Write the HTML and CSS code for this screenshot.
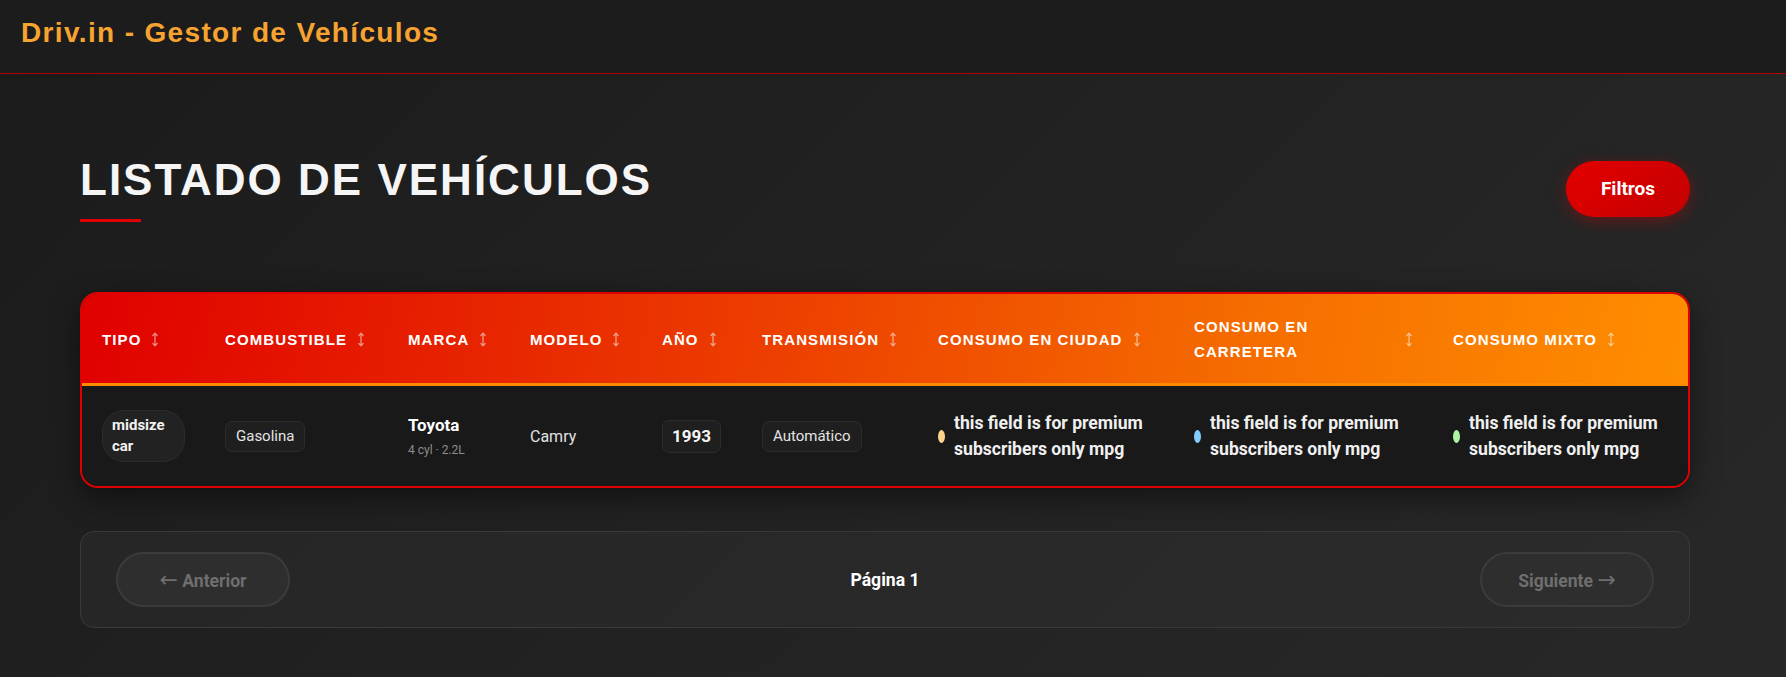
FILE: index.html
```html
<!DOCTYPE html>
<html lang="es">
<head>
<meta charset="utf-8">
<title>Driv.in - Gestor de Vehículos</title>
<link rel="stylesheet" href="styles.css">
</head>
<body>
<header class="topbar">
  <h1 class="brand">Driv.in - Gestor de Vehículos</h1>
</header>
<main class="main">
  <div class="title-row">
    <h2 class="page-title">LISTADO DE VEHÍCULOS</h2>
    <button class="btn-filter">Filtros</button>
  </div>

  <div class="table-card">
    <table class="vtable">
      <colgroup>
        <col class="c-tipo"><col class="c-comb"><col class="c-marca"><col class="c-modelo"><col class="c-anio"><col class="c-trans"><col class="c-ciudad"><col class="c-carr"><col class="c-mixto">
      </colgroup>
      <thead>
        <tr>
          <th><div class="th-in"><span class="th-text">TIPO</span><svg class="sort" viewBox="0 0 8 15"><path d="M4 1.2V13.8M1.8 3.6L4 1.2L6.2 3.6M1.8 11.4L4 13.8L6.2 11.4"/></svg></div></th>
          <th><div class="th-in"><span class="th-text">COMBUSTIBLE</span><svg class="sort" viewBox="0 0 8 15"><path d="M4 1.2V13.8M1.8 3.6L4 1.2L6.2 3.6M1.8 11.4L4 13.8L6.2 11.4"/></svg></div></th>
          <th><div class="th-in"><span class="th-text">MARCA</span><svg class="sort" viewBox="0 0 8 15"><path d="M4 1.2V13.8M1.8 3.6L4 1.2L6.2 3.6M1.8 11.4L4 13.8L6.2 11.4"/></svg></div></th>
          <th><div class="th-in"><span class="th-text">MODELO</span><svg class="sort" viewBox="0 0 8 15"><path d="M4 1.2V13.8M1.8 3.6L4 1.2L6.2 3.6M1.8 11.4L4 13.8L6.2 11.4"/></svg></div></th>
          <th><div class="th-in"><span class="th-text">AÑO</span><svg class="sort" viewBox="0 0 8 15"><path d="M4 1.2V13.8M1.8 3.6L4 1.2L6.2 3.6M1.8 11.4L4 13.8L6.2 11.4"/></svg></div></th>
          <th><div class="th-in"><span class="th-text">TRANSMISIÓN</span><svg class="sort" viewBox="0 0 8 15"><path d="M4 1.2V13.8M1.8 3.6L4 1.2L6.2 3.6M1.8 11.4L4 13.8L6.2 11.4"/></svg></div></th>
          <th><div class="th-in"><span class="th-text">CONSUMO EN CIUDAD</span><svg class="sort" viewBox="0 0 8 15"><path d="M4 1.2V13.8M1.8 3.6L4 1.2L6.2 3.6M1.8 11.4L4 13.8L6.2 11.4"/></svg></div></th>
          <th><div class="th-in"><span class="th-text">CONSUMO EN CARRETERA</span><svg class="sort" viewBox="0 0 8 15"><path d="M4 1.2V13.8M1.8 3.6L4 1.2L6.2 3.6M1.8 11.4L4 13.8L6.2 11.4"/></svg></div></th>
          <th><div class="th-in"><span class="th-text">CONSUMO MIXTO</span><svg class="sort" viewBox="0 0 8 15"><path d="M4 1.2V13.8M1.8 3.6L4 1.2L6.2 3.6M1.8 11.4L4 13.8L6.2 11.4"/></svg></div></th>
        </tr>
      </thead>
      <tbody>
        <tr>
          <td><span class="badge-type">midsize car</span></td>
          <td><span class="chip">Gasolina</span></td>
          <td><div class="make">Toyota</div><div class="make-sub">4 cyl · 2.2L</div></td>
          <td><span class="model">Camry</span></td>
          <td><span class="year">1993</span></td>
          <td><span class="chip">Automático</span></td>
          <td><div class="cons"><span class="dot dot-city"></span><span class="cons-text">this field is for premium subscribers only mpg</span></div></td>
          <td><div class="cons"><span class="dot dot-hwy"></span><span class="cons-text">this field is for premium subscribers only mpg</span></div></td>
          <td><div class="cons"><span class="dot dot-mix"></span><span class="cons-text">this field is for premium subscribers only mpg</span></div></td>
        </tr>
      </tbody>
    </table>
  </div>

  <nav class="pager">
    <button class="pager-btn" disabled><span class="arrow">←</span> Anterior</button>
    <span class="pager-info">Página 1</span>
    <button class="pager-btn" disabled>Siguiente <span class="arrow">→</span></button>
  </nav>
</main>
</body>
</html>
```

FILE: styles.css
```css
html, body {
  margin: 0;
  padding: 0;
}

body {
  min-height: 677px;
  background: linear-gradient(135deg, #1b1b1b 0%, #222222 50%, #282828 100%);
  font-family: Roboto, "Liberation Sans", sans-serif;
  color: #f0f0f0;
}

.topbar {
  height: 74px;
  box-sizing: border-box;
  padding: 17px 20px 0 21px;
  background: #1c1c1c;
  border-bottom: 1px solid #b40000;
}

.brand {
  margin: 0;
  font-family: "Liberation Sans", Arial, sans-serif;
  font-size: 28px;
  font-weight: 700;
  letter-spacing: 1.35px;
  color: #f7a331;
  line-height: normal;
}

.main {
  padding: 81px 96px 40px 80px;
}

.title-row {
  display: flex;
  justify-content: space-between;
  align-items: center;
  margin-bottom: 70px;
}

.page-title {
  margin: 0;
  font-family: "Liberation Sans", Arial, sans-serif;
  font-size: 44px;
  font-weight: 700;
  letter-spacing: 2px;
  color: #f5f5f5;
  line-height: normal;
}

.page-title::after {
  content: "";
  display: block;
  width: 61px;
  height: 3px;
  margin-top: 14px;
  background: #e00000;
}

.btn-filter {
  border: none;
  border-radius: 30px;
  padding: 17px 35px;
  font-family: Roboto, sans-serif;
  font-size: 19px;
  font-weight: 700;
  line-height: 22px;
  color: #ffffff;
  background: linear-gradient(135deg, #e30000 0%, #c40000 100%);
  box-shadow: 0 4px 16px rgba(220, 0, 0, 0.35);
}

.table-card {
  border: 2px solid #e00000;
  border-radius: 18px;
  overflow: hidden;
  background: #191919;
  box-shadow: 0 10px 30px rgba(0, 0, 0, 0.45);
}

.vtable {
  width: 100%;
  table-layout: fixed;
  border-collapse: collapse;
}

.c-tipo { width: 123px; }
.c-comb { width: 183px; }
.c-marca { width: 122px; }
.c-modelo { width: 132px; }
.c-anio { width: 100px; }
.c-trans { width: 176px; }
.c-ciudad { width: 256px; }
.c-carr { width: 259px; }
.c-mixto { width: auto; }

.vtable thead tr {
  background: linear-gradient(100deg, #e00000 0%, #ec3a00 40%, #f67000 75%, #ff8e00 100%);
  border-bottom: 3px solid #ff8c00;
}

.vtable th {
  padding: 20px 20px 19px;
  text-align: left;
  font-family: "Liberation Sans", Arial, sans-serif;
  font-size: 15px;
  font-weight: 700;
  letter-spacing: 1.1px;
  line-height: 25px;
  color: #ffffff;
}

.th-in {
  display: flex;
  align-items: center;
  gap: 10px;
}

.sort {
  flex-shrink: 0;
  width: 8px;
  height: 15px;
  fill: none;
  stroke: rgba(255, 255, 255, 0.55);
  stroke-width: 1.25;
  stroke-linecap: round;
  stroke-linejoin: round;
}

.vtable td {
  padding: 24px 20px;
  vertical-align: middle;
  background: #191919;
}

.badge-type {
  display: inline-block;
  box-sizing: border-box;
  padding: 4px 9px;
  border: 1px solid #2c2c2c;
  border-radius: 22px;
  background: #222222;
  font-size: 15px;
  font-weight: 700;
  line-height: 21px;
  color: #f2f2f2;
}

.chip {
  display: inline-block;
  padding: 6px 10px;
  border: 1px solid #2c2c2c;
  border-radius: 7px;
  background: #1f1f1f;
  font-size: 15px;
  line-height: 17px;
  color: #e4e4e4;
}

.make {
  font-size: 17px;
  font-weight: 700;
  color: #ffffff;
  line-height: 22px;
}

.make-sub {
  margin-top: 7px;
  font-size: 12px;
  color: #8d8d8d;
  line-height: 15px;
}

.model {
  font-size: 16px;
  color: #e2e2e2;
}

.year {
  display: inline-block;
  padding: 6px 9px;
  border: 1px solid #2c2c2c;
  border-radius: 7px;
  background: #1f1f1f;
  font-size: 17px;
  font-weight: 700;
  line-height: 19px;
  color: #f5f5f5;
}

.cons {
  display: flex;
  align-items: center;
  gap: 9px;
}

.dot {
  flex-shrink: 0;
  width: 7px;
  height: 13px;
  border-radius: 50%;
}

.dot-city { background: #ffd28a; }
.dot-hwy { background: #82cbfa; }
.dot-mix { background: #aef2a4; }

.cons-text {
  font-size: 17.6px;
  font-weight: 700;
  line-height: 26px;
  color: #f0f0f0;
}

.pager {
  margin-top: 43px;
  display: flex;
  justify-content: space-between;
  align-items: center;
  padding: 20px 35px;
  border: 1px solid #393939;
  border-radius: 14px;
  background: linear-gradient(135deg, #262626 0%, #2b2b2b 100%);
}

.pager-btn {
  box-sizing: border-box;
  width: 174px;
  height: 55px;
  border: 2px solid #3b3b3b;
  border-radius: 28px;
  background: #2e2e2e;
  font-family: Roboto, sans-serif;
  font-size: 17.6px;
  font-weight: 700;
  color: #6f6f6f;
}

.arrow {
  font-family: "DejaVu Sans", sans-serif;
  font-size: 22px;
  font-weight: 400;
  line-height: 1;
}

.pager-info {
  font-size: 17.6px;
  font-weight: 700;
  color: #ffffff;
}
```
